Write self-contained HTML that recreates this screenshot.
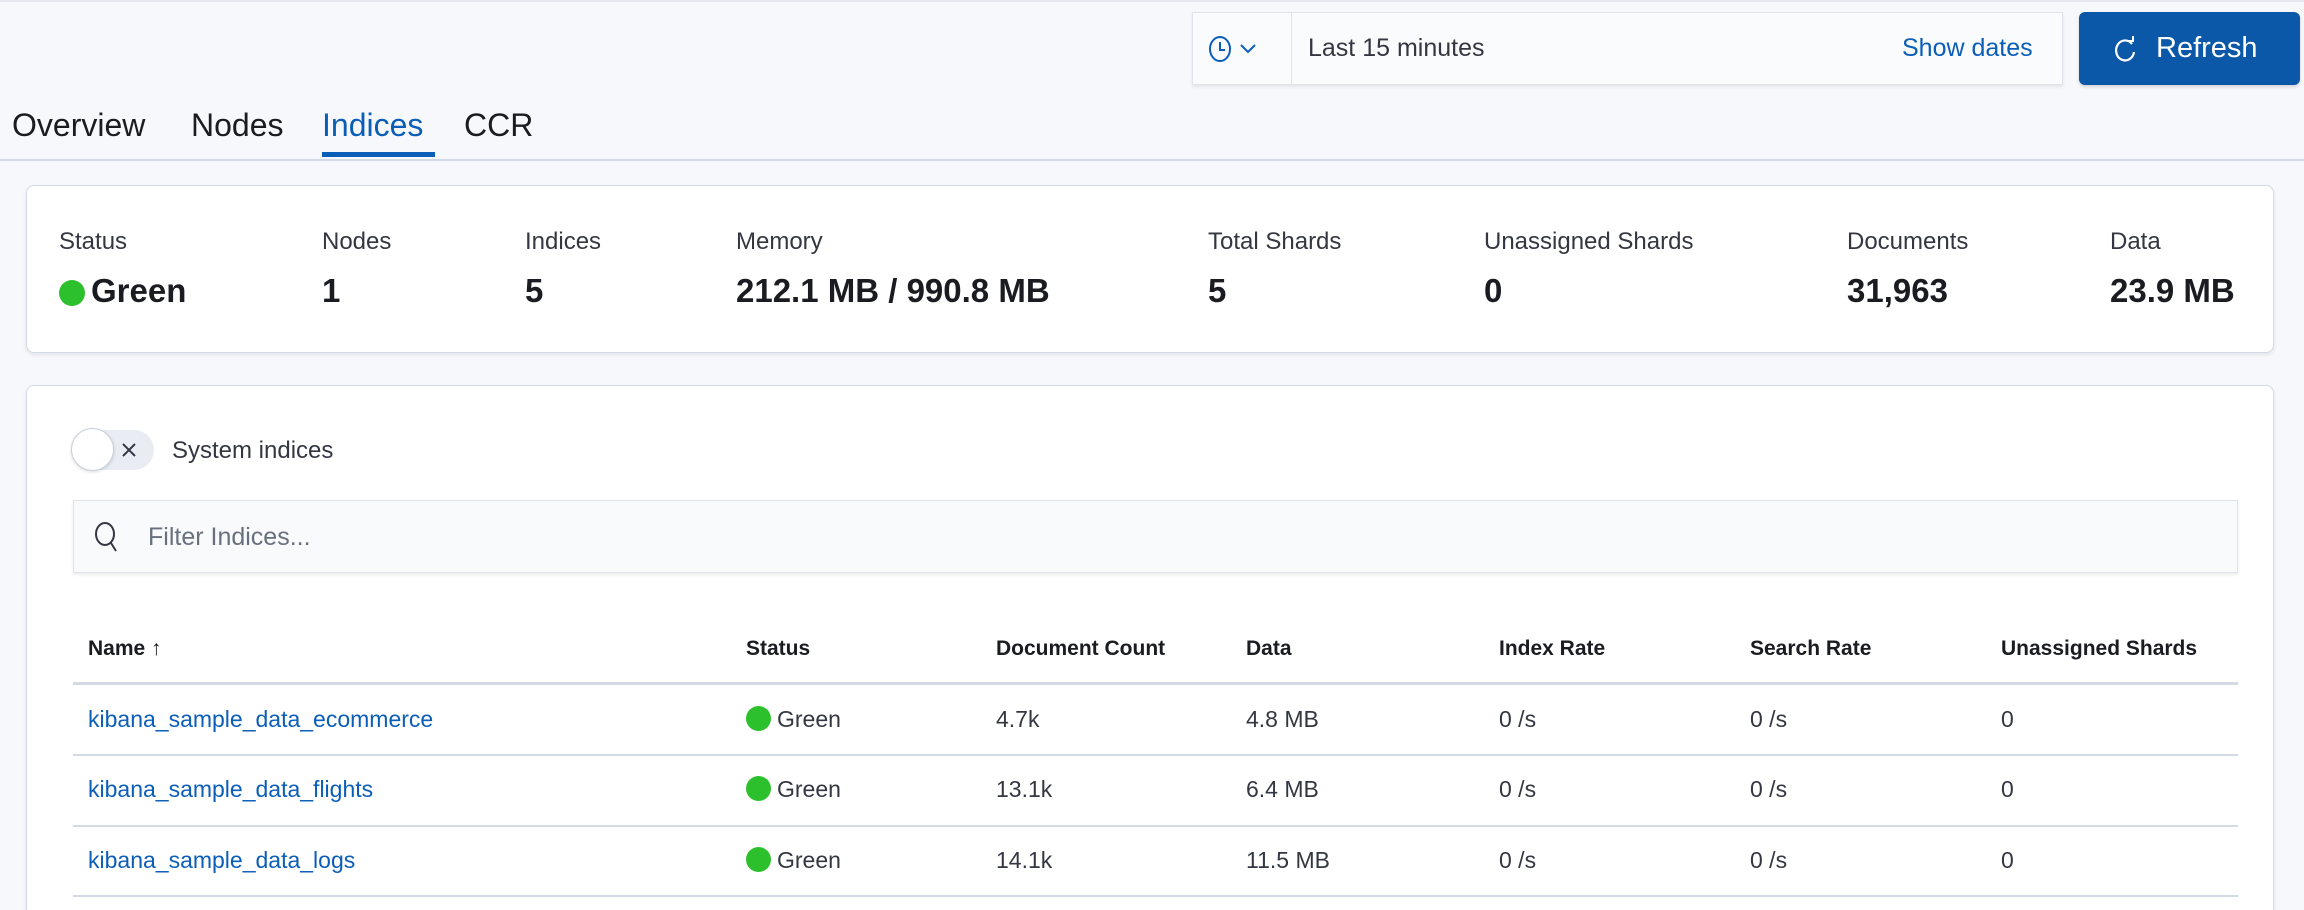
<!DOCTYPE html>
<html style="overflow:hidden;height:910px"><head><meta charset="utf-8"><style>
*{margin:0;padding:0;box-sizing:border-box}
body{width:2304px;height:910px;background:#f7f8fc;font-family:"Liberation Sans",sans-serif;color:#343741;position:relative;overflow:hidden}
.a{position:absolute;white-space:nowrap}
.panel{position:absolute;background:#fff;border:1px solid #d3dae6;border-radius:8px;box-shadow:0 2px 4px rgba(0,0,0,.08)}
.lbl{font-size:24px;color:#343741;top:228px}
.val{font-size:33px;font-weight:bold;color:#1a1c21;top:272px}
.th{font-size:21px;font-weight:bold;color:#1a1c21;top:637px}
.td{font-size:23px;color:#343741}
.lnk{color:#0b5eb8}
.line{position:absolute;left:73px;width:2165px;height:2px;background:#d3dae6}
.dot{display:inline-block;width:25px;height:25px;border-radius:50%;background:#2cc12c;vertical-align:-4px;margin-right:6px}
</style></head><body>
<div class="a" style="left:0;top:0;width:2304px;height:2px;background:#e6e9f0"></div>
<div class="a" style="left:1192px;top:12px;width:871px;height:73px;background:#fafbfd;border:1px solid #dfe3ea;box-shadow:0 2px 3px rgba(0,0,0,.08)"></div>
<div class="a" style="left:1291px;top:12px;width:1px;height:73px;background:#dfe3ea"></div>
<svg class="a" style="left:1208px;top:34px" width="52" height="30" viewBox="0 0 52 30"><ellipse cx="12" cy="15" rx="10" ry="12" fill="none" stroke="#0b5eb8" stroke-width="2"/><path d="M12 8v8h5" fill="none" stroke="#0b5eb8" stroke-width="2"/><path d="M33 11l7 7 7-7" fill="none" stroke="#0b5eb8" stroke-width="2"/></svg>
<div class="a" style="left:1308px;top:34px;font-size:25px;color:#343741">Last 15 minutes</div>
<div class="a" style="left:1902px;top:34px;font-size:25px;color:#0b5eb8">Show dates</div>
<div class="a" style="left:2079px;top:12px;width:221px;height:73px;background:#0b57a8;border-radius:6px;box-shadow:0 2px 3px rgba(0,0,0,.15)"></div>
<svg class="a" style="left:2114px;top:36px" width="24" height="28" viewBox="0 0 24 28"><path d="M18 8A9 10 0 1 0 20 16" fill="none" stroke="#fff" stroke-width="2.2"/><path d="M13 5h6V0" fill="none" stroke="#fff" stroke-width="2"/></svg>
<div class="a" style="left:2156px;top:32px;font-size:29px;color:#fff">Refresh</div>
<div class="a" style="left:12px;top:107px;font-size:32px;color:#1a1c21">Overview</div>
<div class="a" style="left:191px;top:107px;font-size:32px;color:#1a1c21">Nodes</div>
<div class="a" style="left:322px;top:107px;font-size:32px;color:#0b5eb8">Indices</div>
<div class="a" style="left:464px;top:107px;font-size:32px;color:#1a1c21">CCR</div>
<div class="a" style="left:322px;top:152px;width:113px;height:5px;background:#0b5eb8"></div>
<div class="a" style="left:0;top:159px;width:2304px;height:2px;background:#d3dae6"></div>
<div class="panel" style="left:26px;top:185px;width:2248px;height:168px"></div>
<div class="a lbl" style="left:59px">Status</div>
<div class="a val" style="left:59px"><span class="dot" style="width:26px;height:26px"></span>Green</div>
<div class="a lbl" style="left:322px">Nodes</div><div class="a val" style="left:322px">1</div>
<div class="a lbl" style="left:525px">Indices</div><div class="a val" style="left:525px">5</div>
<div class="a lbl" style="left:736px">Memory</div><div class="a val" style="left:736px">212.1 MB / 990.8 MB</div>
<div class="a lbl" style="left:1208px">Total Shards</div><div class="a val" style="left:1208px">5</div>
<div class="a lbl" style="left:1484px">Unassigned Shards</div><div class="a val" style="left:1484px">0</div>
<div class="a lbl" style="left:1847px">Documents</div><div class="a val" style="left:1847px">31,963</div>
<div class="a lbl" style="left:2110px">Data</div><div class="a val" style="left:2110px">23.9 MB</div>
<div class="panel" style="left:26px;top:385px;width:2248px;height:540px;border-bottom:none;border-radius:8px 8px 0 0"></div>
<div class="a" style="left:73px;top:430px;width:81px;height:40px;border-radius:20px;background:#e9edf3"></div>
<div class="a" style="left:71px;top:428px;width:43px;height:43px;border-radius:50%;background:#fff;border:1px solid #c9d0da;box-shadow:0 1px 3px rgba(0,0,0,.15)"></div>
<svg class="a" style="left:121px;top:442px" width="16" height="16" viewBox="0 0 16 16"><path d="M2 2l12 12M14 2L2 14" stroke="#343741" stroke-width="2"/></svg>
<div class="a" style="left:172px;top:437px;font-size:24px;color:#343741">System indices</div>
<div class="a" style="left:73px;top:500px;width:2165px;height:73px;background:#f9fafc;border:1px solid #dfe3ea;box-shadow:0 2px 3px rgba(0,0,0,.07)"></div>
<svg class="a" style="left:93px;top:521px" width="30" height="32" viewBox="0 0 30 32"><ellipse cx="12" cy="13" rx="9" ry="11" fill="none" stroke="#343741" stroke-width="2"/><path d="M18 22l5 8" stroke="#343741" stroke-width="2"/></svg>
<div class="a" style="left:148px;top:523px;font-size:25px;color:#69707d">Filter Indices...</div>
<div class="a th" style="left:88px">Name <span style="font-weight:normal">↑</span></div>
<div class="a th" style="left:746px">Status</div>
<div class="a th" style="left:996px">Document Count</div>
<div class="a th" style="left:1246px">Data</div>
<div class="a th" style="left:1499px">Index Rate</div>
<div class="a th" style="left:1750px">Search Rate</div>
<div class="a th" style="left:2001px">Unassigned Shards</div>
<div class="line" style="top:682px;height:3px"></div>
<div class="line" style="top:754px"></div>
<div class="line" style="top:825px"></div>
<div class="line" style="top:895px"></div>

<div class="a td lnk" style="left:88px;top:706px">kibana_sample_data_ecommerce</div>
<div class="a td" style="left:746px;top:706px"><span class="dot"></span>Green</div>
<div class="a td" style="left:996px;top:706px">4.7k</div>
<div class="a td" style="left:1246px;top:706px">4.8 MB</div>
<div class="a td" style="left:1499px;top:706px">0 /s</div>
<div class="a td" style="left:1750px;top:706px">0 /s</div>
<div class="a td" style="left:2001px;top:706px">0</div>

<div class="a td lnk" style="left:88px;top:776px">kibana_sample_data_flights</div>
<div class="a td" style="left:746px;top:776px"><span class="dot"></span>Green</div>
<div class="a td" style="left:996px;top:776px">13.1k</div>
<div class="a td" style="left:1246px;top:776px">6.4 MB</div>
<div class="a td" style="left:1499px;top:776px">0 /s</div>
<div class="a td" style="left:1750px;top:776px">0 /s</div>
<div class="a td" style="left:2001px;top:776px">0</div>

<div class="a td lnk" style="left:88px;top:847px">kibana_sample_data_logs</div>
<div class="a td" style="left:746px;top:847px"><span class="dot"></span>Green</div>
<div class="a td" style="left:996px;top:847px">14.1k</div>
<div class="a td" style="left:1246px;top:847px">11.5 MB</div>
<div class="a td" style="left:1499px;top:847px">0 /s</div>
<div class="a td" style="left:1750px;top:847px">0 /s</div>
<div class="a td" style="left:2001px;top:847px">0</div>
</body></html>
